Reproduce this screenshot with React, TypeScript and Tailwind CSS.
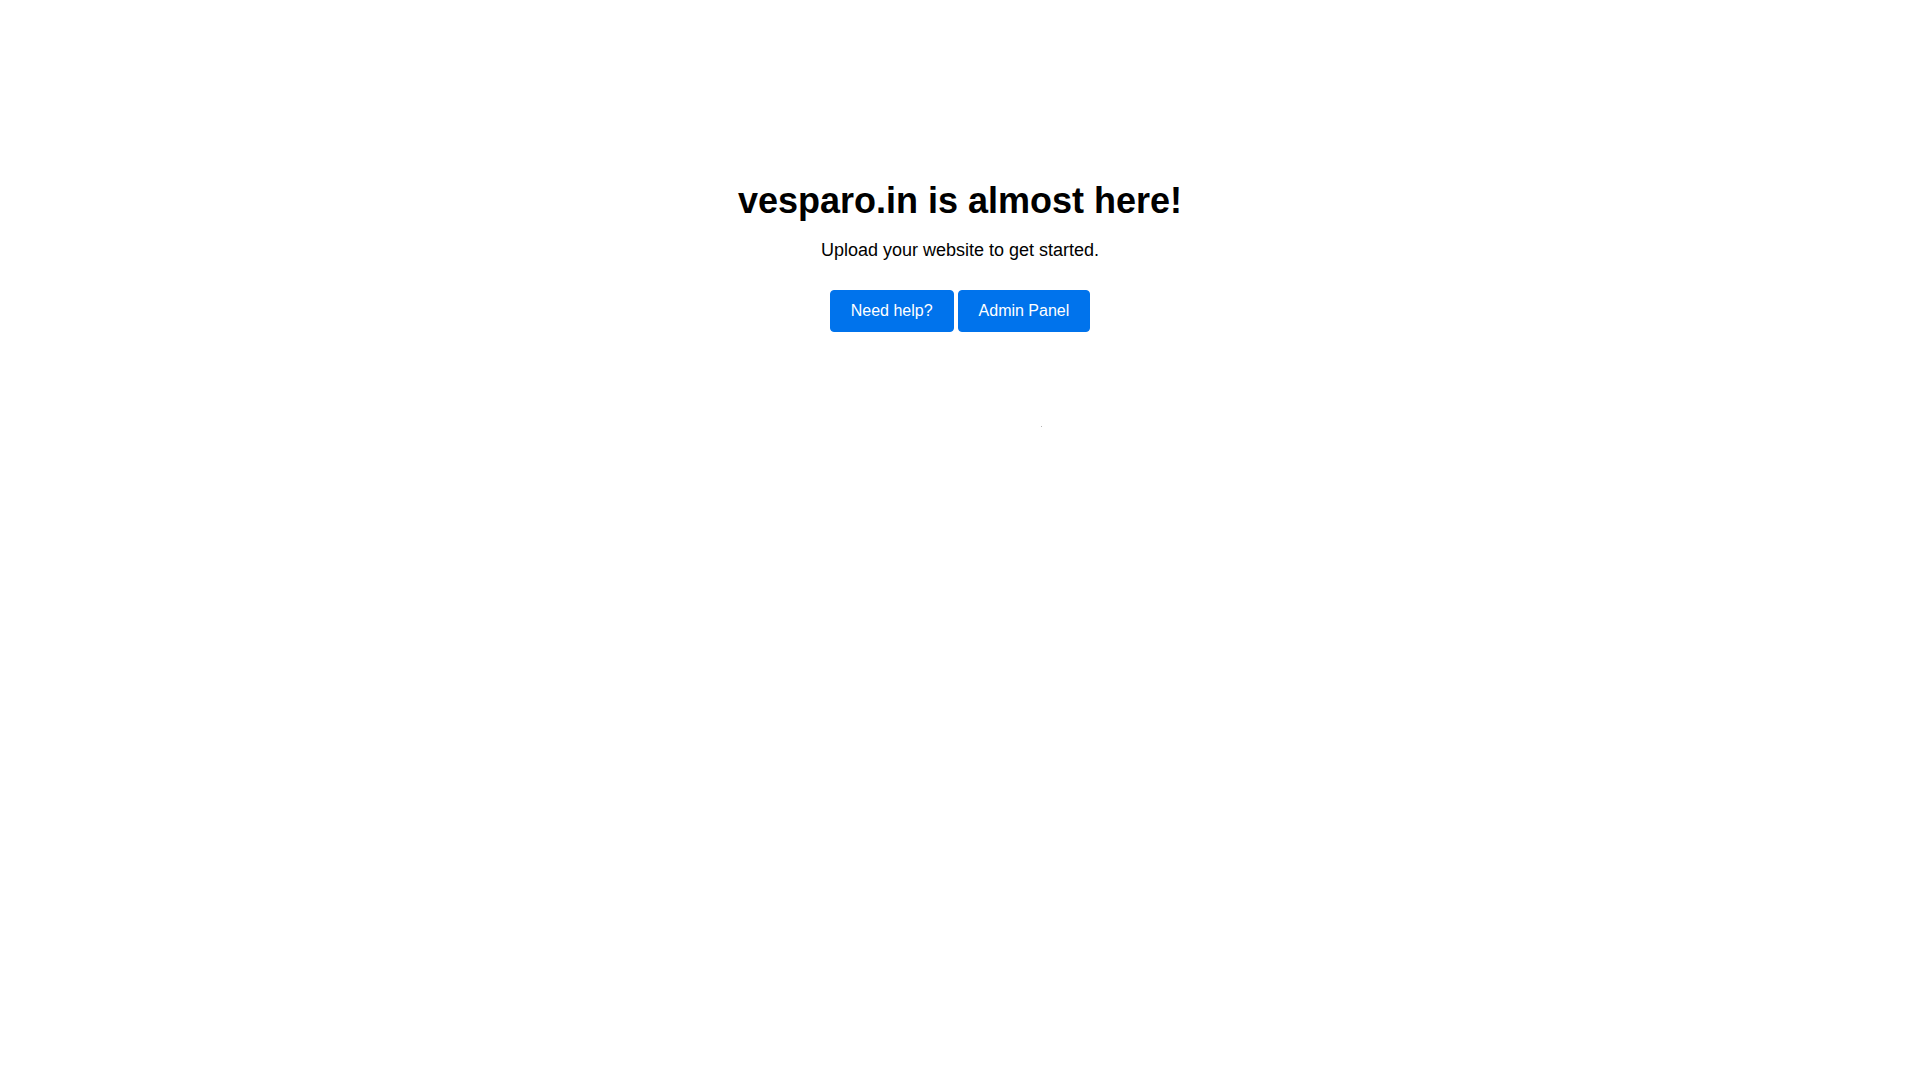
export default function App() {
  return (
    <div className="min-h-screen w-full bg-white font-['Liberation_Sans',Arial,sans-serif] text-black">
      <div className="flex flex-col items-center pt-[181px] text-center">
        <h1 className="text-[36px] font-bold leading-[40px]">vesparo.in is almost here!</h1>
        <p className="mt-[17px] text-[18px] leading-[24px]">Upload your website to get started.</p>

        <div className="mt-[28px] flex gap-[4px]">
          <a
            href="#"
            className="rounded-[4px] border border-[#0073ec] bg-[#0073ec] px-[20px] py-2 text-[16px] leading-[24px] text-white"
          >
            Need help?
          </a>
          <a
            href="#"
            className="rounded-[4px] border border-[#0073ec] bg-[#0073ec] px-[20px] py-2 text-[16px] leading-[24px] text-white"
          >
            Admin Panel
          </a>
        </div>

        {/* tracking pixel */}
        <div className="mt-[94px] ml-[162px] h-px w-px bg-[#b5b5b5]" />
      </div>
    </div>
  );
}
